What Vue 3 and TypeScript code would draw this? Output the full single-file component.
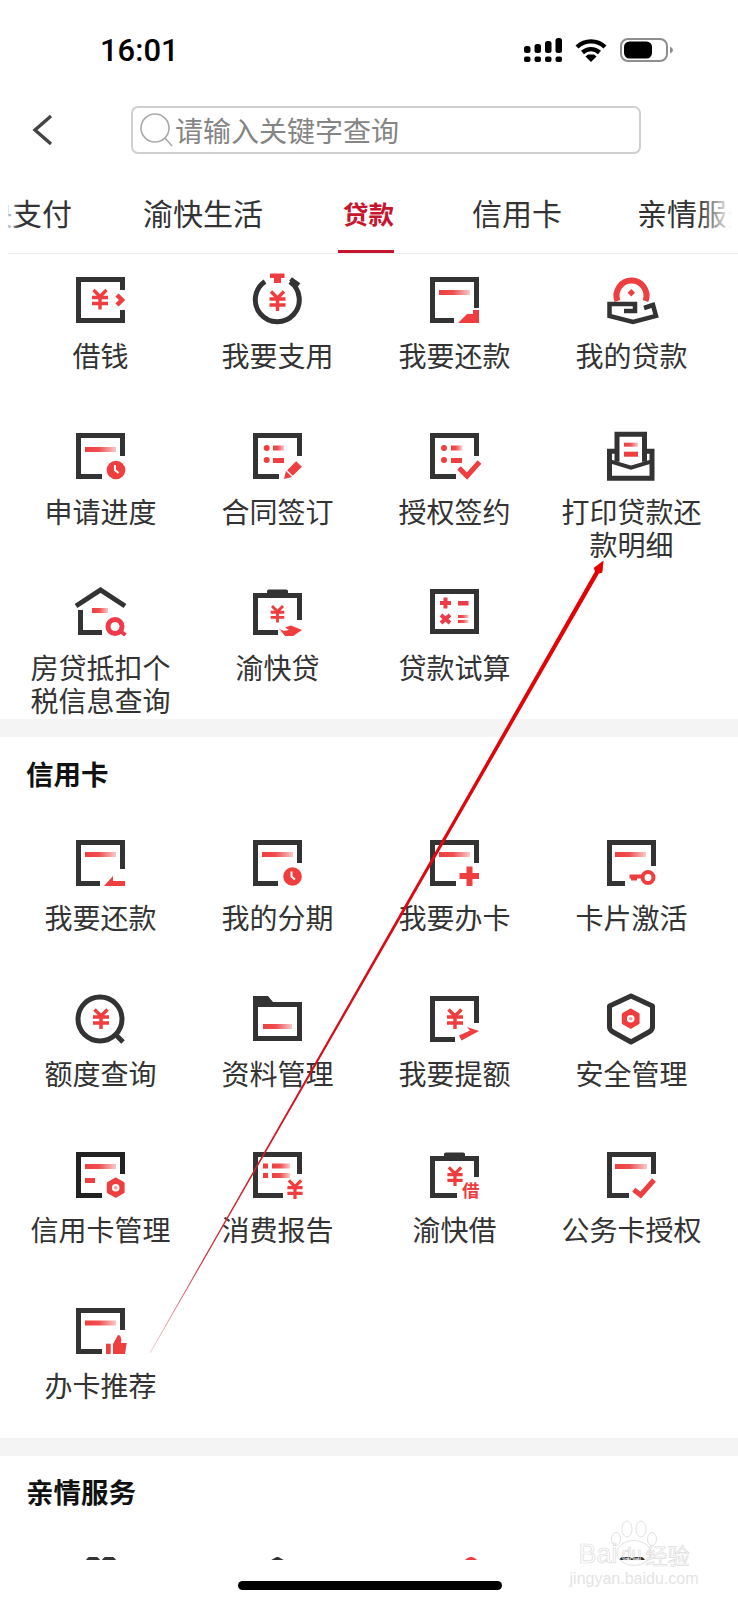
<script setup lang="ts">
type Item = { label: string; icon: string };

const DARK = "#333";
const RED = "#ef3e3f";

// shared pieces of the icon set, drawn on a 49x46 box
function frame(right: number, bottom: number, top = 2.5): string {
  return `<path d="M46.5 ${right} V${top} H2.5 V43.5 H${bottom}" fill="none" stroke="${DARK}" stroke-width="5"/>`;
}
function bar(x: number, y: number, w: number, h = 5, fill = "url(#fade)"): string {
  return `<rect x="${x}" y="${y}" width="${w}" height="${h}" fill="${fill}"/>`;
}
function yuan(cx: number, cy: number, s = 1): string {
  return `<g transform="translate(${cx} ${cy}) scale(${s})" fill="none" stroke="${RED}" stroke-width="3.4"><path d="M-6.5 -9.5 L0 -3 L6.5 -9.5 M-8 -2 H8 M-8 4 H8 M0 -3 V10"/></g>`;
}
function dot(cx: number, cy: number, r = 3): string {
  return `<circle cx="${cx}" cy="${cy}" r="${r}" fill="${RED}"/>`;
}
function clock(cx: number, cy: number): string {
  return `<circle cx="${cx}" cy="${cy}" r="9.3" fill="${RED}"/><path d="M${cx - 1} ${cy - 5} V${cy} L${cx + 2.5} ${cy + 3}" fill="none" stroke="#fff" stroke-width="2"/>`;
}
function gear(cx: number, cy: number): string {
  const hex = [0, 60, 120, 180, 240, 300]
    .map((a) => {
      const r = (a * Math.PI) / 180;
      return `${(cx + 8.6 * Math.sin(r)).toFixed(1)},${(cy - 8.6 * Math.cos(r)).toFixed(1)}`;
    })
    .join(" ");
  return `<polygon points="${hex}" fill="${RED}" stroke="${RED}" stroke-width="3" stroke-linejoin="round"/><circle cx="${cx}" cy="${cy}" r="3.8" fill="#fff"/><circle cx="${cx}" cy="${cy}" r="1.8" fill="${RED}" opacity=".5"/>`;
}
function check(a: string): string {
  return `<polyline points="${a}" fill="none" stroke="${RED}" stroke-width="5"/>`;
}
function bump(): string {
  return `<path d="M14 5 V2 Q14 0.5 16 0.5 H33 Q35 0.5 35 2 V5 Z" fill="${DARK}"/>`;
}

const icons: Record<string, string> = {
  borrow:
    `<path d="M46.5 13 V2.5 H2.5 V43.5 H46.5 V33" fill="none" stroke="${DARK}" stroke-width="5"/>` +
    yuan(24, 22.5) +
    `<polyline points="41,18 46,23 41,28" fill="none" stroke="${RED}" stroke-width="4.5"/>`,
  stopwatch:
    `<path d="M12 4.5 A22 22 0 1 0 37 4.8" fill="none" stroke="${DARK}" stroke-width="5"/>` +
    `<path d="M37.5 2 L46 8" stroke="${DARK}" stroke-width="4.5"/>` +
    `<path d="M17 -3.5 H31.5 V1 H28 V6 H21 V1 H17 Z" fill="${RED}"/>` +
    yuan(24.5, 24),
  loanRepay:
    frame(31, 24) + bar(9, 13, 31) + `<polygon points="28,46 37,37 43,37 43,33 49,33 49,46" fill="${RED}"/>`,
  myLoan:
    `<path d="M10.5 24 A15 15 0 1 1 38.5 24" fill="none" stroke="${RED}" stroke-width="6"/>` +
    `<polygon points="24.3,12 28,15.7 24.3,19.4 20.6,15.7" fill="${RED}"/>` +
    `<path d="M17 34 H28 V27 H2.5 V39 L26 45 L49 39 L46 28 L37 31" fill="none" stroke="${DARK}" stroke-width="4.5"/>`,
  progress: frame(23, 26) + bar(9, 14, 31) + clock(40, 37),
  contract:
    frame(23, 26) +
    dot(13.7, 15) +
    bar(20, 12.5, 11) +
    dot(13.7, 27) +
    bar(20, 25, 11, 5, RED) +
    `<path d="M37 40 L46 31" stroke="${RED}" stroke-width="8"/><polygon points="31,46 33,38 39,44" fill="${RED}"/>`,
  authSign:
    frame(23, 26) +
    dot(14, 15) +
    bar(21, 12.5, 11) +
    dot(14, 27) +
    bar(21, 25, 11, 5, RED) +
    check("29,35 37,43 49.5,29"),
  print:
    `<g transform="translate(0 -1.3)">` +
    `<path d="M10 30 V2.5 H37.5 V30" fill="none" stroke="${DARK}" stroke-width="5"/>` +
    `<path d="M8 19.5 H2.5 V46.5 H45 V19.5 H39" fill="none" stroke="${DARK}" stroke-width="5"/>` +
    `<path d="M4 30 L24 36 L44 30" fill="none" stroke="${DARK}" stroke-width="4"/>` +
    bar(17, 11, 14, 4) +
    bar(17, 20, 14, 5, RED) +
    `</g>`,
  house:
    `<path d="M0 17 L24.5 1 L49 17" fill="none" stroke="${DARK}" stroke-width="5"/>` +
    `<path d="M4.5 21 V43.5 H26" fill="none" stroke="${DARK}" stroke-width="5"/>` +
    bar(16, 19, 16, 5) +
    `<circle cx="39" cy="37.5" r="7" fill="none" stroke="#f03a4a" stroke-width="5"/><path d="M44 42 L49.5 46" stroke="#f03a4a" stroke-width="4"/>`,
  yuKuaiDai:
    bump() +
    frame(31, 25, 6.5) +
    yuan(24.5, 25, 0.85) +
    `<path d="M24 37 C28 43 32 42 36 41 L32 38.5 L38 36.5 L49 41 L40 47 L32 47 Z" fill="${RED}"/>`,
  calc:
    `<rect x="2.5" y="2.5" width="44" height="40" fill="none" stroke="${DARK}" stroke-width="5"/>` +
    `<path d="M10 14 H21 M15.5 8.5 V19.5 M11 26 L20 34 M20 26 L11 34" stroke="#ec3c4a" stroke-width="4"/>` +
    bar(28, 12, 10.5, 4.5, "#ec3c4a") +
    bar(28, 26, 10.5, 3) +
    bar(28, 31, 10.5, 3),
  cardRepay:
    frame(29, 24) + bar(9, 12, 31) + `<polygon points="28,46 37,36 37,41 49,41 49,46" fill="${RED}"/>`,
  instalment: frame(23, 25) + bar(9, 12, 31) + clock(39.5, 36.5),
  applyCard:
    frame(23, 26) + bar(9, 12, 31) + `<path d="M29.5 36 H49 M39.5 26.5 V46" stroke="${RED}" stroke-width="6"/>`,
  activate:
    frame(26, 18) +
    bar(8, 12, 31) +
    `<circle cx="41" cy="37.5" r="5.5" fill="none" stroke="${RED}" stroke-width="4"/><path d="M22.5 34.5 H35 V38.5 H30 V40.5 H24 V38.5 H22.5 Z" fill="${RED}"/>`,
  quota:
    `<circle cx="24" cy="23" r="22" fill="none" stroke="${DARK}" stroke-width="5"/><path d="M39 38 L47 46" stroke="${DARK}" stroke-width="5"/>` +
    yuan(25, 23),
  folder:
    `<path fill-rule="evenodd" d="M0 0 H15 L20 6 H49 V45 H0 Z M5 11 V40 H44 V11 Z" fill="${DARK}"/>` + bar(10, 28, 29),
  raise:
    frame(27, 25) +
    yuan(25, 23) +
    `<polygon points="29,39.5 40,34.5 37,31 49,35 31.5,44.5" fill="${RED}"/>`,
  shield:
    `<path d="M24 0 L45.5 10 V31 Q45.5 34 42 36 L24 46 L6 36 Q2.5 34 2.5 31 V10 Z" fill="none" stroke="${DARK}" stroke-width="5" stroke-linejoin="round"/>` +
    gear(23.7, 22.7),
  cardManage:
    `<path d="M46.5 22 V2.5 H2.5 V43.5 H26" fill="none" stroke="#222" stroke-width="5"/>` +
    bar(9, 12, 31) +
    bar(9, 26, 10, 5, RED) +
    gear(39.7, 35.7),
  report:
    frame(22, 30) +
    bar(10, 11.5, 5, 5, RED) +
    bar(19, 11.5, 18) +
    bar(10, 21, 5, 5, RED) +
    bar(19, 21, 18) +
    yuan(42, 37.5, 0.95),
  yuKuaiJie:
    bump() +
    frame(25, 27, 6.5) +
    yuan(25, 24.5, 0.95) +
    `<text x="32" y="45" font-size="17.5" font-weight="700" fill="${RED}" font-family="'Noto Sans CJK SC', sans-serif">借</text>`,
  corpAuth: frame(22, 22) + bar(8, 12, 32) + check("26.7,37.7 33.7,43 47,28"),
  recommend:
    frame(22, 26) +
    bar(9, 12.5, 31) +
    `<rect x="30" y="35.7" width="4.7" height="10.3" fill="${RED}"/><path d="M37 36 L42 27 Q46 27 45 35 H50.7 L49 46 H37 Z" fill="${RED}"/>`
};

const tabs = ["渝快支付", "渝快生活", "贷款", "信用卡", "亲情服务"];

const loanItems: Item[] = [
  { label: "借钱", icon: "borrow" },
  { label: "我要支用", icon: "stopwatch" },
  { label: "我要还款", icon: "loanRepay" },
  { label: "我的贷款", icon: "myLoan" },
  { label: "申请进度", icon: "progress" },
  { label: "合同签订", icon: "contract" },
  { label: "授权签约", icon: "authSign" },
  { label: "打印贷款还款明细", icon: "print" },
  { label: "房贷抵扣个税信息查询", icon: "house" },
  { label: "渝快贷", icon: "yuKuaiDai" },
  { label: "贷款试算", icon: "calc" }
];

const cardItems: Item[] = [
  { label: "我要还款", icon: "cardRepay" },
  { label: "我的分期", icon: "instalment" },
  { label: "我要办卡", icon: "applyCard" },
  { label: "卡片激活", icon: "activate" },
  { label: "额度查询", icon: "quota" },
  { label: "资料管理", icon: "folder" },
  { label: "我要提额", icon: "raise" },
  { label: "安全管理", icon: "shield" },
  { label: "信用卡管理", icon: "cardManage" },
  { label: "消费报告", icon: "report" },
  { label: "渝快借", icon: "yuKuaiJie" },
  { label: "公务卡授权", icon: "corpAuth" },
  { label: "办卡推荐", icon: "recommend" }
];

// top few pixels of the next row, the rest is below the fold
const peeks = [
  `<circle cx="17" cy="7" r="6" fill="none" stroke="${DARK}" stroke-width="4"/><circle cx="33" cy="7" r="6" fill="none" stroke="${DARK}" stroke-width="4"/>`,
  `<polygon points="24.5,-0.5 36,6 13,6" fill="${DARK}"/>`,
  `<circle cx="41" cy="7" r="7" fill="${RED}"/>`,
  `<circle cx="19" cy="7" r="6" fill="none" stroke="${DARK}" stroke-width="4"/><circle cx="31" cy="7" r="6" fill="none" stroke="${DARK}" stroke-width="4"/>`
];
</script>

<template>
  <div class="page">
    <svg class="defs" width="0" height="0" aria-hidden="true">
      <defs>
        <linearGradient id="fade" x1="0" y1="0" x2="1" y2="0">
          <stop offset="0" stop-color="#ef3e3f" />
          <stop offset="0.45" stop-color="#ef4f50" />
          <stop offset="1" stop-color="#f9c9c9" />
        </linearGradient>
        <linearGradient id="stroke" gradientUnits="userSpaceOnUse" x1="603" y1="562" x2="150" y2="1353">
          <stop offset="0" stop-color="#e60000" />
          <stop offset="0.65" stop-color="#d3101c" />
          <stop offset="0.88" stop-color="#d0303c" />
          <stop offset="1" stop-color="#e06070" stop-opacity="0.35" />
        </linearGradient>
      </defs>
    </svg>

    <div class="status">
      <span class="time">16:01</span>
      <div class="status-icons">
        <svg width="38" height="24" viewBox="0 0 38 24">
          <g fill="#000">
            <rect x="0" y="8" width="6.5" height="7" rx="2.5" />
            <rect x="10.5" y="6" width="6.5" height="9" rx="2.5" />
            <rect x="21" y="3" width="6.5" height="12" rx="2.5" />
            <rect x="31.5" y="0" width="6.5" height="15" rx="2.5" />
            <rect x="0" y="18.5" width="6.5" height="5.5" rx="2" />
            <rect x="10.5" y="18.5" width="6.5" height="5.5" rx="2" />
            <rect x="21" y="18.5" width="6.5" height="5.5" rx="2" />
            <rect x="31.5" y="18.5" width="6.5" height="5.5" rx="2" />
          </g>
        </svg>
        <svg width="32" height="24" viewBox="0 0 32 24">
          <path d="M2 9 C10 1.5 22 1.5 30 9" fill="none" stroke="#000" stroke-width="4.4" />
          <path d="M7.5 14.5 C12.5 10 19.5 10 24.5 14.5" fill="none" stroke="#000" stroke-width="4.4" />
          <polygon points="16,24 10.5,18.5 13,16.5 19,16.5 21.5,18.5" fill="#000" />
        </svg>
        <svg width="54" height="24" viewBox="0 0 54 24">
          <rect x="1" y="1" width="46" height="22" rx="7" fill="none" stroke="#8e8e8e" stroke-width="2" />
          <rect x="4" y="3.5" width="28" height="17" rx="5.5" fill="#000" />
          <path d="M50 8.5 Q53 10 53 12 Q53 14 50 15.5 Z" fill="#8e8e8e" />
        </svg>
      </div>
    </div>

    <div class="search-row">
      <svg class="back" width="22" height="32" viewBox="0 0 22 32">
        <polyline points="19,2 3,16 19,30" fill="none" stroke="#444" stroke-width="3.4" />
      </svg>
      <div class="search">
        <svg width="36" height="36" viewBox="0 0 36 36">
          <circle cx="16" cy="16" r="14" fill="none" stroke="#aaa" stroke-width="1.6" />
          <path d="M26 26 L33 34" stroke="#aaa" stroke-width="1.6" />
        </svg>
        <span class="placeholder">请输入关键字查询</span>
      </div>
    </div>

    <div class="tabs">
      <div class="tab-track">
        <span v-for="tab in tabs" :key="tab" class="tab" :class="{ active: tab === '贷款' }">{{ tab }}</span>
      </div>
      <div class="fade fade-left" />
      <div class="fade fade-right" />
    </div>

    <section class="loan">
      <div class="grid">
        <div v-for="item in loanItems" :key="item.label" class="cell">
          <svg class="icon" width="49" height="46" viewBox="0 0 49 46" v-html="icons[item.icon]" />
          <div class="label">{{ item.label }}</div>
        </div>
      </div>
    </section>

    <section class="card">
      <h2 class="title">信用卡</h2>
      <div class="grid">
        <div v-for="item in cardItems" :key="item.label" class="cell">
          <svg class="icon" width="49" height="46" viewBox="0 0 49 46" v-html="icons[item.icon]" />
          <div class="label">{{ item.label }}</div>
        </div>
      </div>
    </section>

    <section class="family">
      <h2 class="title">亲情服务</h2>
      <div class="grid peek">
        <div v-for="(peek, i) in peeks" :key="i" class="cell">
          <svg class="icon" width="49" height="46" viewBox="0 0 49 46" v-html="peek" />
        </div>
      </div>
    </section>

    <svg class="arrow" width="738" height="1600" viewBox="0 0 738 1600">
      <polygon
        points="603.5,560.5 602.4,572.6 598.9,573.5 150.5,1353 149.8,1352.6 595.1,571.3 593.6,568"
        fill="url(#stroke)"
      />
    </svg>

    <div class="watermark">
      <svg class="paw" width="50" height="46" viewBox="0 0 50 46">
        <g fill="none" stroke="#e2e2e2" stroke-width="1">
          <ellipse cx="7" cy="19" rx="4.5" ry="6.5" />
          <ellipse cx="18" cy="9" rx="5" ry="8" />
          <ellipse cx="32" cy="9" rx="5" ry="8" />
          <ellipse cx="43" cy="19" rx="4.5" ry="6.5" />
          <ellipse cx="25" cy="33" rx="17" ry="12.5" />
        </g>
      </svg>
      <div class="mark-main"><span>Bai</span><span class="mark-du">du</span><span class="mark-cn">经验</span></div>
      <div class="mark-sub">jingyan.baidu.com</div>
    </div>

    <div class="home-bar" />
  </div>
</template>

<style>
html,
body {
  margin: 0;
  background: #fff;
}
</style>

<style scoped>
.page {
  position: relative;
  width: 738px;
  height: 1600px;
  overflow: hidden;
  background: #fff;
  color: #333;
  font-family: "Noto Sans CJK SC", "Noto Sans", sans-serif;
}

.defs {
  position: absolute;
}

.status {
  height: 100px;
  display: flex;
  align-items: center;
  justify-content: space-between;
  padding: 0 64px 0 100px;
}

.time {
  font-family: Roboto, "Liberation Sans", sans-serif;
  font-weight: 500;
  font-size: 31px;
  color: #000;
}

.status-icons {
  display: flex;
  align-items: center;
  gap: 13px;
}

.search-row {
  margin-top: 6px;
  height: 48px;
  display: flex;
  align-items: center;
  padding-left: 32px;
}

.back {
  flex: none;
  margin-right: 77px;
}

.search {
  width: 510px;
  height: 48px;
  box-sizing: border-box;
  display: flex;
  align-items: center;
  padding-left: 6px;
  border: 2px solid #cfcfcf;
  border-radius: 7px;
}

.placeholder {
  font-size: 28px;
  color: #858585;
  line-height: 1;
}

.tabs {
  position: relative;
  margin: 36px 0 0 8px;
  height: 63px;
  overflow: hidden;
  border-bottom: 1px solid #eee;
}

.tab-track {
  display: flex;
  gap: 75px;
  margin-left: -56px;
  white-space: nowrap;
}

.tab {
  flex: none;
  font-size: 30px;
  line-height: 44px;
  height: 63px;
  box-sizing: border-box;
  color: #333;
}

.tab:first-child {
  margin-right: -4px;
}

.tab.active {
  margin-right: 3px;
  padding-left: 5px;
  font-size: 25.5px;
  line-height: 46px;
  font-weight: 700;
  color: #c8152f;
  border-bottom: 3px solid #c8152f;
}

.fade {
  position: absolute;
  top: 0;
  width: 20px;
  height: 60px;
}

.fade-left {
  left: -8px;
  background: linear-gradient(to right, #fff 20%, rgba(255, 255, 255, 0));
}

.fade-right {
  right: 0;
  width: 40px;
  background: linear-gradient(to left, #fff 15%, rgba(255, 255, 255, 0));
}

.grid {
  display: grid;
  grid-template-columns: repeat(4, 177px);
  padding-left: 12px;
}

.loan .grid {
  padding-top: 23px;
  grid-template-rows: 156px 156px 130px;
}

.card,
.family {
  border-top: 18px solid #f4f4f4;
}

.card .grid {
  margin-top: 47px;
  grid-template-rows: 156px 156px 156px 130px;
}

.card .label {
  margin-top: 15px;
}

.title {
  margin: 16px 0 0 26px;
  font-size: 27.5px;
  line-height: 40px;
  font-weight: 700;
  color: #111;
}

.family .title {
  margin-top: 15px;
}

.cell {
  display: flex;
  flex-direction: column;
  align-items: center;
}

.icon {
  flex: none;
  overflow: visible;
}

.label {
  margin-top: 16px;
  padding: 0 16px;
  font-size: 28px;
  line-height: 33px;
  text-align: center;
  color: #333;
}

.peek {
  margin-top: 46px;
  height: 3px;
  overflow: hidden;
}

.arrow {
  position: absolute;
  left: 0;
  top: 0;
  pointer-events: none;
}

.watermark {
  position: absolute;
  left: 566px;
  top: 1520px;
  width: 136px;
  text-align: center;
  color: transparent;
  pointer-events: none;
}

.paw {
  display: block;
  margin: 0 auto -26px;
}

.mark-main {
  display: flex;
  justify-content: center;
  align-items: center;
  font-family: "Liberation Sans", sans-serif;
  font-size: 27px;
  line-height: 28px;
  -webkit-text-stroke: 0.7px #dcdcdc;
}

.mark-du {
  font-size: 18px;
  margin: 0 4px;
}

.mark-cn {
  font-size: 22px;
  font-family: "Noto Sans CJK SC", sans-serif;
}

.mark-sub {
  margin-top: 2px;
  font-family: "Liberation Sans", sans-serif;
  font-size: 16px;
  line-height: 18px;
  color: #e4e4e4;
}

.home-bar {
  position: absolute;
  left: 238px;
  top: 1581px;
  width: 264px;
  height: 9px;
  border-radius: 5px;
  background: #000;
}
</style>
